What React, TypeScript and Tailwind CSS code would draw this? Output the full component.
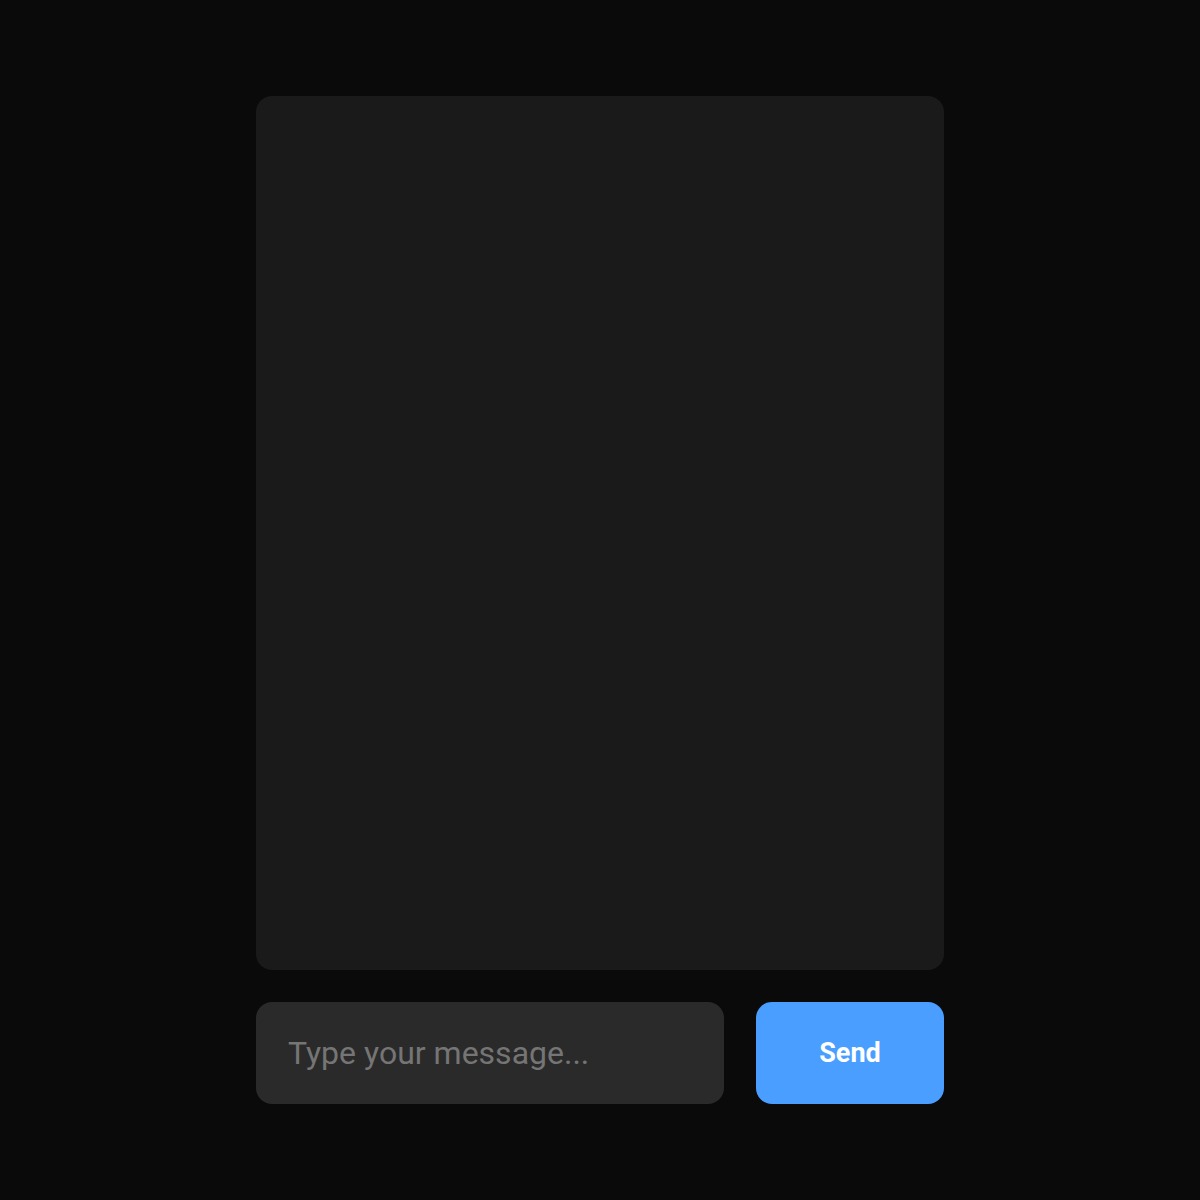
import { useState } from "react";

const App = () => {
  const [messages, setMessages] = useState<string[]>([]);
  const [message, setMessage] = useState<string>("");

  const handleSubmit = (e: React.FormEvent<HTMLFormElement>) => {
    e.preventDefault();
    if (!message.trim()) return;
    setMessages([...messages, message]);
    setMessage("");
  };

  return (
    <main className="min-h-screen bg-[#0a0a0a] p-24 font-[Roboto,sans-serif] text-white flex justify-center">
      <div className="w-full max-w-[688px] flex flex-col gap-8">
        <div className="flex-1 overflow-y-auto rounded-2xl bg-[#1a1a1a] p-8">
          {messages.map((text, index) => (
            <p key={index} className="text-[32px] mb-4">
              {text}
            </p>
          ))}
        </div>

        <form onSubmit={handleSubmit} className="flex gap-8">
          <input
            type="text"
            aria-label="Message"
            value={message}
            onChange={(e) => setMessage(e.target.value)}
            placeholder="Type your message..."
            className="flex-1 min-w-0 rounded-2xl bg-[#2a2a2a] px-8 py-8 text-[32px] leading-[38px] placeholder:text-[#757575] outline-none"
          />
          <button
            type="submit"
            className="w-[188px] rounded-2xl bg-[#4a9eff] text-[27px] leading-8 font-bold cursor-pointer"
          >
            Send
          </button>
        </form>
      </div>
    </main>
  );
};

export default App;
